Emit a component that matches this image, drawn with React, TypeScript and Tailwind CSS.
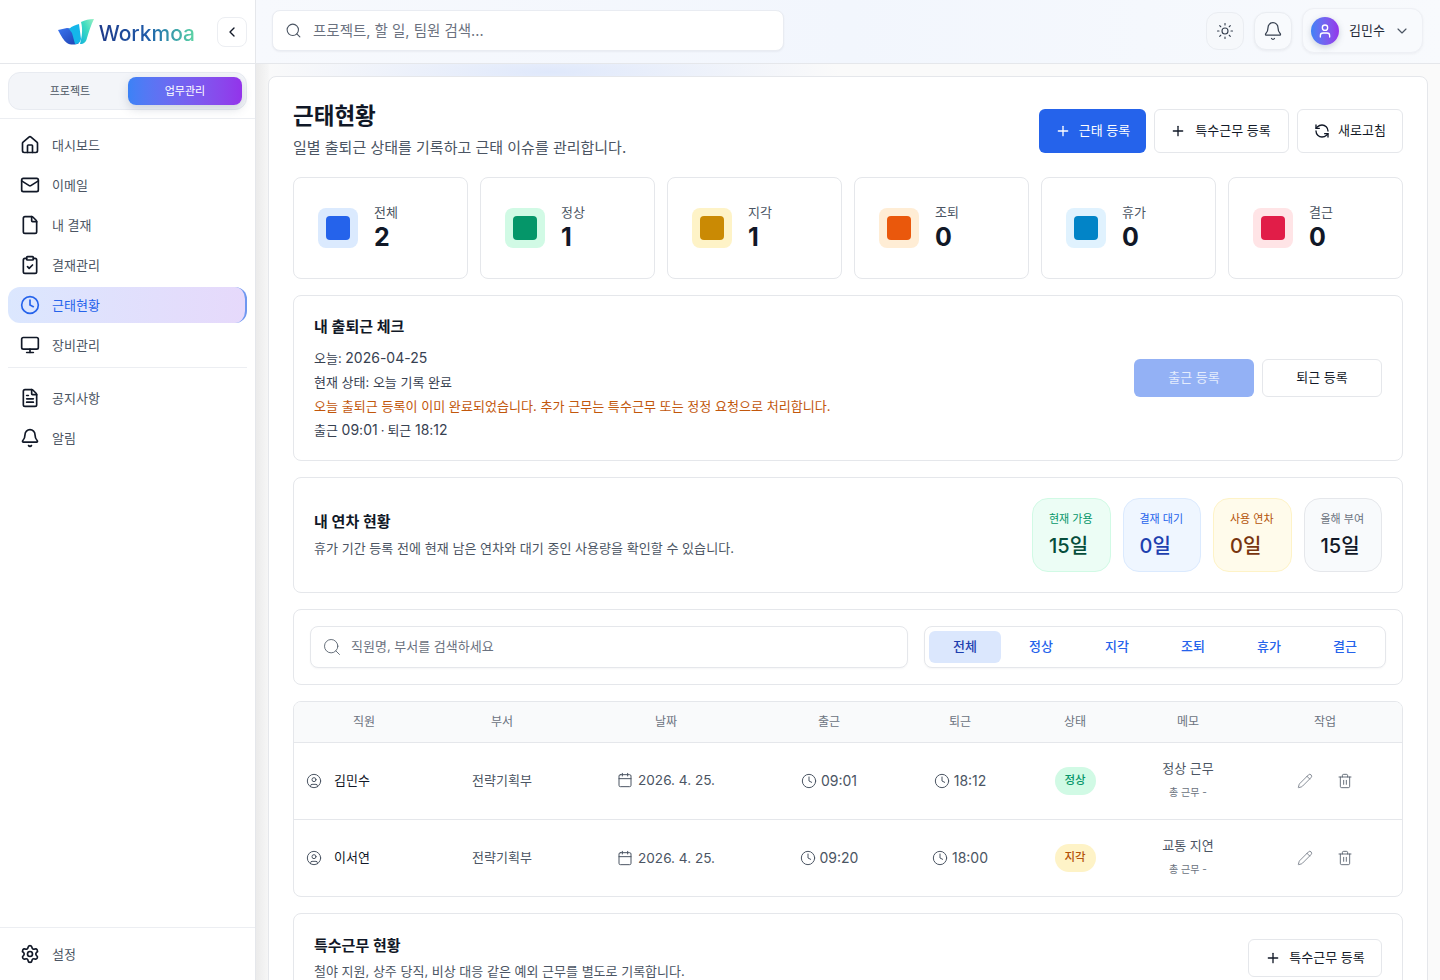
import React from "react";
import {
  House, Mail, File, ClipboardCheck, Clock, Monitor, FileText, Bell, Settings, Search, Sun, User,
  ChevronDown, ChevronLeft, Plus, RefreshCcw, Calendar, CircleUser, Pencil, Trash2,
} from "lucide-react";

function Logo() {
  return (
    <svg width="36" height="26" viewBox="0 0 36 26" className="shrink-0">
      <defs>
        <linearGradient id="lg1" x1="0" y1="0" x2="1" y2="1">
          <stop offset="0" stopColor="#3b76f0" />
          <stop offset="1" stopColor="#1d3fb0" />
        </linearGradient>
        <linearGradient id="lg2" x1="0" y1="1" x2="1" y2="0">
          <stop offset="0" stopColor="#12b4dc" />
          <stop offset="0.55" stopColor="#3fdcc0" />
          <stop offset="1" stopColor="#9af0c4" />
        </linearGradient>
      </defs>
      <path d="M0 11 L9 9 C12 9 14 10 15 13 L21 24 C18 26 12 26 9 24 C6 22 3 17 0 11 Z" fill="url(#lg1)" />
      <path d="M11 10 C14 7 18 6 21 5 L23 20 C22 24 20 25 17 25 L14 14 Z" fill="#14b6ea" />
      <path d="M23 3 C27 1 31 0 36 0 C33 6 31 12 29 19 C28 23 26 25 22 25 C24 18 25 10 23 3 Z" fill="url(#lg2)" />
    </svg>
  );
}

const nav1 = [
  { label: "대시보드", Icon: House },
  { label: "이메일", Icon: Mail },
  { label: "내 결재", Icon: File },
  { label: "결재관리", Icon: ClipboardCheck },
  { label: "근태현황", Icon: Clock, active: true },
  { label: "장비관리", Icon: Monitor },
];
const nav2 = [
  { label: "공지사항", Icon: FileText },
  { label: "알림", Icon: Bell },
];

function NavRow({ label, Icon, active }: { label: string; Icon: any; active?: boolean }) {
  return (
    <div
      className={
        active
          ? "flex h-9 items-center gap-3 rounded-xl border-r-2 border-r-[#6f97f0] bg-gradient-to-r from-[#dbe7fe] to-[#e6d9fb] px-3 text-[#2563eb]"
          : "flex h-9 items-center gap-3 rounded-xl px-3 text-[#1f2937]"
      }
    >
      <Icon size={20} strokeWidth={2} className={active ? "text-[#2563eb]" : "text-[#111827]"} />
      <span className={active ? "mt-[1px] text-[13px]" : "mt-[1px] text-[13px] text-[#4b5563]"}>{label}</span>
    </div>
  );
}

function Sidebar() {
  return (
    <aside className="flex h-full w-[256px] shrink-0 flex-col border-r border-[#e5e7eb] bg-white">
      <div className="flex h-[64px] shrink-0 items-center justify-end gap-[22px] border-b border-[#e5e7eb] pr-2">
        <div className="flex items-center gap-[5px]">
          <Logo />
          <span className="mt-[3px] bg-gradient-to-r from-[#1e3a8a] via-[#1e5aa8] to-[#5fd6a4] bg-clip-text text-[21px] font-medium leading-none text-transparent">
            Workmoa
          </span>
        </div>
        <button className="flex h-[30px] w-[30px] items-center justify-center rounded-lg border border-[#eceef2] bg-white">
          <ChevronLeft size={16} strokeWidth={2} className="text-[#111827]" />
        </button>
      </div>
      <div className="shrink-0 border-b border-[#eceef2] px-2 pb-[8px] pt-[8px]">
        <div className="flex h-[38px] items-center gap-[1px] rounded-xl border border-[#e8ebf1] bg-[#f3f5f9] pl-1 pr-1">
          <div className="flex h-7 w-[114px] items-center justify-center text-[11px] text-[#4b5563]">프로젝트</div>
          <div className="flex h-7 flex-1 items-center justify-center rounded-lg bg-gradient-to-r from-[#3b82f6] to-[#9333ea] text-[11px] text-white shadow-[0_4px_10px_rgba(100,116,139,0.25)]">
            업무관리
          </div>
        </div>
      </div>
      <nav className="flex flex-1 flex-col px-2 pt-[8px]">
        <div className="flex flex-col gap-1">
          {nav1.map((n) => (
            <NavRow key={n.label} {...n} />
          ))}
        </div>
        <div className="my-[4px] mt-[4px] h-px bg-[#eceef2]" />
        <div className="mt-[8px] flex flex-col gap-1">
          {nav2.map((n) => (
            <NavRow key={n.label} {...n} />
          ))}
        </div>
      </nav>
      <div className="shrink-0 border-t border-[#eceef2] px-2 py-[8px]">
        <NavRow label="설정" Icon={Settings} />
      </div>
    </aside>
  );
}

function Header() {
  return (
    <header className="flex h-[64px] shrink-0 items-center justify-between border-b border-[#e5e7eb] bg-gradient-to-r from-[#f7f9fd] via-[#f2f6fd] to-[#f8fafd] pb-[2px] pl-4 pr-[17px]">
      <div className="flex h-[41px] w-[512px] items-center gap-[11px] rounded-lg border border-[#e9ecf2] bg-white pl-3 shadow-[0_1px_2px_rgba(15,23,42,0.05)]">
        <Search size={17} strokeWidth={1.5} className="text-[#4b5563]" />
        <span className="text-[14.5px] text-[#6b7280]">프로젝트, 할 일, 팀원 검색...</span>
      </div>
      <div className="flex items-center gap-[10px]">
        <button className="flex h-[38px] w-[38px] items-center justify-center rounded-xl border border-[#eaedf2] bg-[#f6f8fb]">
          <Sun size={18} strokeWidth={1.5} className="text-[#374151]" />
        </button>
        <button className="flex h-[38px] w-[38px] items-center justify-center rounded-xl border border-[#eaedf2] bg-[#f8fafd] shadow-[0_1px_3px_rgba(15,23,42,0.06)]">
          <Bell size={20} strokeWidth={1.5} className="text-[#374151]" />
        </button>
        <div className="flex h-[45px] w-[121px] items-center rounded-xl border border-[#eef0f5] bg-[#f8fafd] pl-2 shadow-[0_1px_3px_rgba(15,23,42,0.05)]">
          <div className="flex h-7 w-7 items-center justify-center rounded-full bg-gradient-to-r from-[#3b82f6] to-[#9333ea] shadow-[0_2px_6px_rgba(100,116,139,0.3)]">
            <User size={16} strokeWidth={2} className="text-white" />
          </div>
          <span className="ml-[10px] text-[13px] text-[#1f2937]">김민수</span>
          <ChevronDown size={16} strokeWidth={1.75} className="ml-[9px] text-[#4b5563]" />
        </div>
      </div>
    </header>
  );
}

const stats = [
  { label: "전체", value: "2", bg: "bg-[#dbeafe]", fg: "bg-[#2563eb]" },
  { label: "정상", value: "1", bg: "bg-[#d1fae5]", fg: "bg-[#059669]" },
  { label: "지각", value: "1", bg: "bg-[#fef3c7]", fg: "bg-[#ca8a04]" },
  { label: "조퇴", value: "0", bg: "bg-[#ffedd5]", fg: "bg-[#ea580c]" },
  { label: "휴가", value: "0", bg: "bg-[#e0f2fe]", fg: "bg-[#0284c7]" },
  { label: "결근", value: "0", bg: "bg-[#ffe4e6]", fg: "bg-[#e11d48]" },
];

function Stat({ label, value, bg, fg }: (typeof stats)[number]) {
  return (
    <div className="flex h-[102px] items-center gap-4 rounded-lg border border-[#e5e7eb] bg-white px-6">
      <div className={`flex h-10 w-10 items-center justify-center rounded-lg ${bg}`}>
        <div className={`h-6 w-6 rounded ${fg}`} />
      </div>
      <div className="flex flex-col pt-[1px]">
        <span className="text-[13px] leading-4 text-[#4b5563]">{label}</span>
        <span className="mt-[1px] text-[25px] font-bold leading-8 text-[#111827]">{value}</span>
      </div>
    </div>
  );
}

const leave = [
  { label: "현재 가용", value: "15일", box: "border-[#d1fae5] bg-[#ecfdf5]", l: "text-[#059669]", v: "text-[#064e3b]" },
  { label: "결재 대기", value: "0일", box: "border-[#dbeafe] bg-[#eff6ff]", l: "text-[#2563eb]", v: "text-[#1e40af]" },
  { label: "사용 연차", value: "0일", box: "border-[#fef3c7] bg-[#fffbeb]", l: "text-[#b45309]", v: "text-[#78350f]" },
  { label: "올해 부여", value: "15일", box: "border-[#e5e7eb] bg-[#f8fafc]", l: "text-[#6b7280]", v: "text-[#111827]" },
];

const tabs = ["전체", "정상", "지각", "조퇴", "휴가", "결근"];

const rows = [
  { name: "김민수", inT: "09:01", outT: "18:12", status: "정상", sc: "bg-[#d1fae5] text-[#059669]", memo: "정상 근무" },
  { name: "이서연", inT: "09:20", outT: "18:00", status: "지각", sc: "bg-[#fef3c7] text-[#b45309]", memo: "교통 지연" },
];

const cols = ["직원", "부서", "날짜", "출근", "퇴근", "상태", "메모", "작업"];
const colW = [140, 136, 192, 134, 128, 102, 124, 152];

function Table() {
  return (
    <div className="mt-4 overflow-hidden rounded-lg border border-[#e5e7eb] bg-white">
      <table className="w-full table-fixed border-collapse">
        <colgroup>
          {colW.map((w, i) => (
            <col key={i} style={{ width: w }} />
          ))}
        </colgroup>
        <thead>
          <tr className="h-[40px] border-b border-[#e5e7eb] bg-[#f9fafb]">
            {cols.map((c, i) => (
              <th key={c} className={i === 7 ? "pr-[2px] text-center text-xs font-normal text-[#6b7280]" : "text-center text-xs font-normal text-[#6b7280]"}>
                {c}
              </th>
            ))}
          </tr>
        </thead>
        <tbody>
          {rows.map((r, i) => (
            <tr key={r.name} className={i === 0 ? "h-[77px] border-b border-[#e5e7eb]" : "h-[77px]"}>
              <td className="pl-3">
                <div className="flex items-center gap-3">
                  <CircleUser size={16} strokeWidth={1.5} className="text-[#4b5563]" />
                  <span className="text-[13px] text-[#111827]">{r.name}</span>
                </div>
              </td>
              <td className="text-center text-[13px] text-[#4b5563]">전략기획부</td>
              <td>
                <div className="flex items-center justify-center gap-[5px] text-[13.6px] text-[#4b5563]">
                  <Calendar size={16} strokeWidth={1.5} />
                  <span>2026. 4. 25.</span>
                </div>
              </td>
              <td>
                <div className="flex items-center justify-center gap-1 text-sm text-[#4b5563]">
                  <Clock size={16} strokeWidth={1.5} />
                  <span>{r.inT}</span>
                </div>
              </td>
              <td>
                <div className="flex items-center justify-center gap-1 text-sm text-[#4b5563]">
                  <Clock size={16} strokeWidth={1.5} />
                  <span>{r.outT}</span>
                </div>
              </td>
              <td>
                <div className="flex justify-center">
                  <span className={`flex h-7 w-[41px] items-center justify-center rounded-full text-[11.5px] font-medium ${r.sc}`}>
                    {r.status}
                  </span>
                </div>
              </td>
              <td className="pb-[3px] text-center">
                <div className="text-[13px] leading-5 text-[#4b5563]">{r.memo}</div>
                <div className="mt-[6px] text-[10px] leading-4 text-[#6b7280]">총 근무 -</div>
              </td>
              <td>
                <div className="flex items-center justify-center gap-6 pr-[2px]">
                  <Pencil size={16} strokeWidth={1} className="text-[#4b5563]" />
                  <Trash2 size={16} strokeWidth={1.25} className="text-[#4b5563]" />
                </div>
              </td>
            </tr>
          ))}
        </tbody>
      </table>
    </div>
  );
}

export default function App() {
  return (
    <div
      className="flex h-screen w-full overflow-hidden bg-white text-[#111827]"
      style={{ fontFamily: 'Inter, "Noto Sans CJK KR", sans-serif' }}
    >
      <Sidebar />
      <div className="flex h-full min-w-0 flex-1 flex-col">
        <Header />
        <main className="min-h-0 flex-1 overflow-hidden bg-[radial-gradient(ellipse_290px_36px_at_294px_8px,#dfe8fb_0%,rgba(226,234,251,0)_100%),linear-gradient(to_right,#ebebeb_0px,#f6f6f6_12px,#fafafa_14px)] px-3 pt-3">
          <div className="rounded-lg border border-[#e5e7eb] bg-white px-6 pt-6">
            <div className="flex items-start justify-between">
              <div>
                <h1 className="text-[22.5px] font-bold leading-[30px] text-[#111827]">근태현황</h1>
                <p className="mt-[5px] text-[15px] leading-6 text-[#4b5563]">일별 출퇴근 상태를 기록하고 근태 이슈를 관리합니다.</p>
              </div>
              <div className="mt-[8px] flex gap-2">
                <button className="flex h-[44px] w-[107px] items-center justify-center gap-2 rounded-md bg-[#2563eb] text-[13px] text-white">
                  <Plus size={16} strokeWidth={2} />
                  근태 등록
                </button>
                <button className="flex h-[44px] w-[135px] items-center justify-center gap-[9px] rounded-md border border-[#e5e7eb] bg-white pr-[2px] text-[13px] text-[#111827]">
                  <Plus size={16} strokeWidth={2} />
                  특수근무 등록
                </button>
                <button className="flex h-[44px] w-[106px] items-center justify-center gap-2 rounded-md border border-[#e5e7eb] bg-white text-[13px] text-[#111827]">
                  <RefreshCcw size={16} strokeWidth={2} />
                  새로고침
                </button>
              </div>
            </div>

            <div className="mt-[17px] grid grid-cols-6 gap-3">
              {stats.map((s) => (
                <Stat key={s.label} {...s} />
              ))}
            </div>

            <section className="mt-4 flex h-[166px] items-center justify-between rounded-lg border border-[#e5e7eb] bg-white px-5">
              <div className="pt-[1px]">
                <h2 className="text-[15px] font-semibold leading-6 text-[#111827]">내 출퇴근 체크</h2>
                <div className="mt-[7px] text-[13px] leading-6 text-[#374151]">
                  <div>
                    오늘: <span className="text-sm leading-6">2026-04-25</span>
                  </div>
                  <div>현재 상태: 오늘 기록 완료</div>
                  <div className="text-[13.07px] text-[#c2570c]">오늘 출퇴근 등록이 이미 완료되었습니다. 추가 근무는 특수근무 또는 정정 요청으로 처리합니다.</div>
                  <div>
                    출근 <span className="text-sm leading-6">09:01</span>
                    <span className="mx-[3px]">·</span>퇴근 <span className="text-sm leading-6">18:12</span>
                  </div>
                </div>
              </div>
              <div className="flex gap-2">
                <button className="flex h-[38px] w-[120px] items-center justify-center rounded-md bg-[#93b1f5] text-[13px] text-[#e5edfd]">출근 등록</button>
                <button className="flex h-[38px] w-[120px] items-center justify-center rounded-md border border-[#e5e7eb] bg-white text-[13px] text-[#111827]">퇴근 등록</button>
              </div>
            </section>

            <section className="mt-4 flex h-[116px] items-center justify-between rounded-lg border border-[#e5e7eb] bg-white px-5">
              <div>
                <h2 className="text-[15px] font-semibold leading-6 text-[#111827]">내 연차 현황</h2>
                <p className="mt-[2px] text-[13.06px] leading-6 text-[#4b5563]">휴가 기간 등록 전에 현재 남은 연차와 대기 중인 사용량을 확인할 수 있습니다.</p>
              </div>
              <div className="flex gap-3">
                {leave.map((b) => (
                  <div key={b.label} className={`h-[74px] w-[78.5px] rounded-2xl border pl-4 pt-[12px] ${b.box}`}>
                    <div className={`text-[11px] leading-4 ${b.l}`}>{b.label}</div>
                    <div className={`mt-[5px] text-xl font-medium leading-7 ${b.v}`}>{b.value}</div>
                  </div>
                ))}
              </div>
            </section>

            <section className="mt-4 flex h-[76px] items-center gap-4 rounded-lg border border-[#e5e7eb] bg-white px-4">
              <div className="flex h-[42px] flex-1 items-center gap-[9px] rounded-lg border border-[#e5e7eb] bg-white pl-[11px] shadow-[0_1px_2px_rgba(15,23,42,0.04)]">
                <Search size={20} strokeWidth={1} className="text-[#4b5563]" />
                <span className="text-[13px] text-[#6b7280]">직원명, 부서를 검색하세요</span>
              </div>
              <div className="flex h-[42px] w-[462px] items-center gap-1 rounded-lg border border-[#e5e7eb] bg-white p-1 shadow-[0_1px_2px_rgba(15,23,42,0.04)]">
                {tabs.map((t, i) => (
                  <div
                    key={t}
                    className={
                      i === 0
                        ? "flex h-8 w-[72px] items-center justify-center rounded-md bg-[#dbe7fd] text-[13px] font-medium text-[#1e40af]"
                        : "flex h-8 w-[72px] items-center justify-center text-[13px] font-medium text-[#2563eb]"
                    }
                  >
                    {t}
                  </div>
                ))}
              </div>
            </section>

            <Table />

            <section className="mt-4 flex h-[100px] items-start justify-between rounded-lg border border-[#e5e7eb] bg-white px-5 pt-5">
              <div>
                <h2 className="text-[15px] font-semibold leading-6 text-[#111827]">특수근무 현황</h2>
                <p className="mt-[1px] text-[13px] leading-6 text-[#4b5563]">철야 지원, 상주 당직, 비상 대응 같은 예외 근무를 별도로 기록합니다.</p>
              </div>
              <button className="mt-[5px] flex h-[38px] w-[134px] items-center justify-center gap-2 rounded-md border border-[#e5e7eb] bg-white text-[13px] text-[#111827]">
                <Plus size={16} strokeWidth={2} />
                특수근무 등록
              </button>
            </section>
          </div>
        </main>
      </div>
    </div>
  );
}
